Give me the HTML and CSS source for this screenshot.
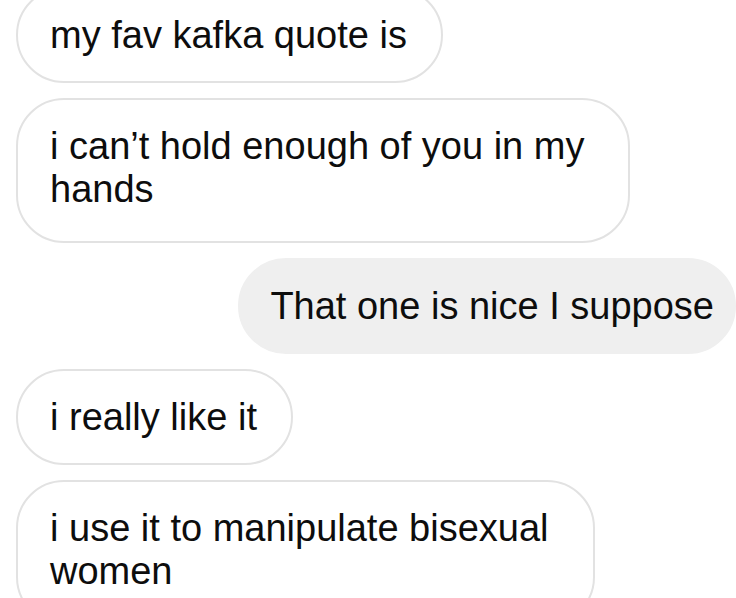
FILE: index.html
```html
<!DOCTYPE html>
<html lang="en">
<head>
<meta charset="utf-8">
<title>Chat</title>
<link rel="stylesheet" href="styles.css">
</head>
<body>
<div class="thread">
  <div class="bubble received">my fav kafka quote is</div>
  <div class="bubble received multi">i can’t hold enough of you in my<br>hands</div>
  <div class="bubble sent">That one is nice I suppose</div>
  <div class="bubble received">i really like it</div>
  <div class="bubble received multi">i use it to manipulate bisexual<br>women</div>
</div>
</body>
</html>
```
FILE: styles.css
```css
html, body {
  margin: 0;
  padding: 0;
  background: #ffffff;
}

body {
  width: 736px;
  height: 598px;
  overflow: hidden;
}

.thread {
  display: flex;
  flex-direction: column;
  align-items: flex-start;
  gap: 15px;
  margin-top: -13px;
  padding-left: 16px;
  font-family: "Liberation Sans", Arial, sans-serif;
  font-size: 38px;
  line-height: 43px;
  color: #0d0d0d;
}

.bubble {
  box-sizing: border-box;
  white-space: nowrap;
  border-radius: 48px;
  border: 2px solid #e2e2e2;
  padding: 25px 34px 24px 32px;
  background: #ffffff;
}

.multi {
  padding-right: 44px;
  padding-bottom: 30px;
}

.sent {
  align-self: flex-end;
  background: #efefef;
  border-color: #efefef;
  padding-left: 30px;
  padding-right: 20px;
}
```
